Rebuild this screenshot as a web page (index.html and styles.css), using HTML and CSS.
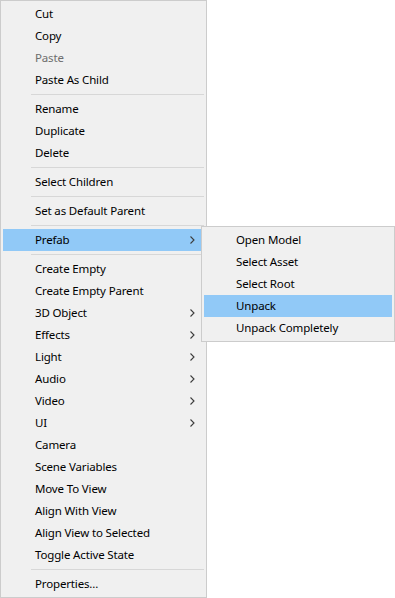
FILE: index.html
```html
<!DOCTYPE html>
<html>
<head>
<meta charset="utf-8">
<link rel="stylesheet" href="styles.css">
</head>
<body>
<div class="stage">
  <div class="menu main">
    <div class="item">Cut</div>
    <div class="item">Copy</div>
    <div class="item disabled">Paste</div>
    <div class="item">Paste As Child</div>
    <div class="sep"></div>
    <div class="item">Rename</div>
    <div class="item">Duplicate</div>
    <div class="item">Delete</div>
    <div class="sep"></div>
    <div class="item">Select Children</div>
    <div class="sep"></div>
    <div class="item">Set as Default Parent</div>
    <div class="sep"></div>
    <div class="item active sub">Prefab<svg class="chev" width="5" height="8" viewBox="0 0 5 8"><path d="M0.5 0.5 L4 4 L0.5 7.5" fill="none" stroke="#3c3c3c" stroke-width="1.1"/></svg></div>
    <div class="sep"></div>
    <div class="item">Create Empty</div>
    <div class="item">Create Empty Parent</div>
    <div class="item sub">3D Object<svg class="chev" width="5" height="8" viewBox="0 0 5 8"><path d="M0.5 0.5 L4 4 L0.5 7.5" fill="none" stroke="#3c3c3c" stroke-width="1.1"/></svg></div>
    <div class="item sub">Effects<svg class="chev" width="5" height="8" viewBox="0 0 5 8"><path d="M0.5 0.5 L4 4 L0.5 7.5" fill="none" stroke="#3c3c3c" stroke-width="1.1"/></svg></div>
    <div class="item sub">Light<svg class="chev" width="5" height="8" viewBox="0 0 5 8"><path d="M0.5 0.5 L4 4 L0.5 7.5" fill="none" stroke="#3c3c3c" stroke-width="1.1"/></svg></div>
    <div class="item sub">Audio<svg class="chev" width="5" height="8" viewBox="0 0 5 8"><path d="M0.5 0.5 L4 4 L0.5 7.5" fill="none" stroke="#3c3c3c" stroke-width="1.1"/></svg></div>
    <div class="item sub">Video<svg class="chev" width="5" height="8" viewBox="0 0 5 8"><path d="M0.5 0.5 L4 4 L0.5 7.5" fill="none" stroke="#3c3c3c" stroke-width="1.1"/></svg></div>
    <div class="item sub">UI<svg class="chev" width="5" height="8" viewBox="0 0 5 8"><path d="M0.5 0.5 L4 4 L0.5 7.5" fill="none" stroke="#3c3c3c" stroke-width="1.1"/></svg></div>
    <div class="item">Camera</div>
    <div class="item">Scene Variables</div>
    <div class="item">Move To View</div>
    <div class="item">Align With View</div>
    <div class="item">Align View to Selected</div>
    <div class="item">Toggle Active State</div>
    <div class="sep"></div>
    <div class="item">Properties...</div>
  </div>
  <div class="menu submenu">
    <div class="item">Open Model</div>
    <div class="item">Select Asset</div>
    <div class="item">Select Root</div>
    <div class="item active">Unpack</div>
    <div class="item">Unpack Completely</div>
  </div>
</div>
</body>
</html>
```
FILE: styles.css
```css
html, body {
  margin: 0;
  padding: 0;
  background: #ffffff;
}
body {
  font-family: "Noto Sans", "Open Sans", sans-serif;
  font-size: 11.5px;
  letter-spacing: -0.15px;
  color: #000000;
}
.stage {
  position: relative;
  width: 395px;
  height: 598px;
}
.menu {
  box-sizing: border-box;
  background: #f0f0f0;
  border: 1px solid #cccccc;
  padding: 2px;
  display: flex;
  flex-direction: column;
}
.main {
  width: 207px;
  height: 598px;
}
.submenu {
  position: absolute;
  left: 201px;
  top: 226px;
  width: 194px;
}
.item {
  height: 22px;
  line-height: 22px;
  padding-left: 32px;
  padding-right: 9px;
  white-space: nowrap;
  display: flex;
  align-items: center;
  justify-content: space-between;
}
.item.active {
  background: #91c9f7;
}
.item.disabled {
  color: #6d6d6d;
}
.chev {
  display: block;
}
.sep {
  height: 1px;
  margin: 3px 0 3px 28px;
  background: #d7d7d7;
}
```
